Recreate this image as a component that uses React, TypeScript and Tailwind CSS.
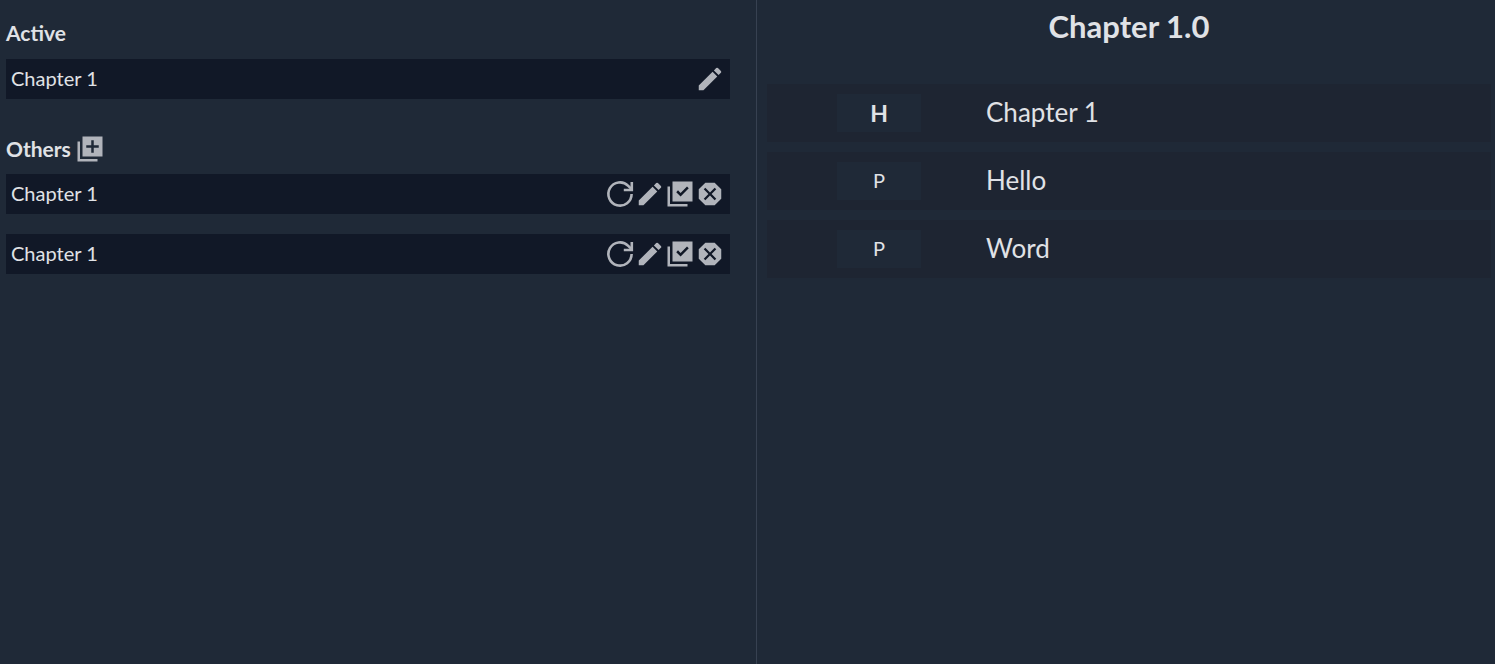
import type { ReactNode } from "react";
import { MdEdit } from "react-icons/md";

function ReloadIcon() {
  return (
    <svg viewBox="0 0 30 30" width="30" height="30" fill="none" stroke="currentColor" strokeWidth="2.6" aria-hidden="true">
      <path d="M26.6 15A11.6 11.6 0 1 1 23.2 6.8L26 9.6" />
      <path d="M26.8 3V11H18.8" />
      <path d="M27.5 12H23L27.5 7z" fill="currentColor" stroke="none" />
    </svg>
  );
}

function SolidIcon({ d }: { d: string }) {
  return (
    <svg viewBox="0 0 24 24" width="30" height="30" fill="currentColor" fillRule="evenodd" aria-hidden="true">
      <path d={d} />
    </svg>
  );
}

const ADD_PATH = "M4 6H2v16h16v-2H4V6zM22 2H6v16h16V2zM19 11h-4v4h-2v-4H9V9h4V5h2v4h4v2z";
const CHECK_PATH =
  "M4 6H2v16h16v-2H4V6zM22 2H6v16h16V2zM12.47 14L9 10.5l1.4-1.41 2.07 2.08L17.6 6 19 7.41z";
const DELETE_PATH =
  "M15.73 3H8.27L3 8.27v7.46L8.27 21h7.46L21 15.73V8.27zM17 15.73L15.73 17 12 13.27 8.27 17 7 15.73 10.73 12 7 8.27 8.27 7 12 10.73 15.73 7 17 8.27 13.27 12z";

function IconButton({ label, children }: { label: string; children: ReactNode }) {
  return (
    <button type="button" aria-label={label} className="flex size-[30px] items-center justify-center text-[#b1b4bb]">
      {children}
    </button>
  );
}

function ChapterRow({ title, active = false }: { title: string; active?: boolean }) {
  return (
    <li className="flex h-10 items-center justify-between bg-[#111827] px-[5px] text-[20px]">
      <span className="pb-0.5">{title}</span>
      <div className="flex">
        {!active && (
          <IconButton label="Restore">
            <ReloadIcon />
          </IconButton>
        )}
        <IconButton label="Edit">
          <MdEdit size={30} />
        </IconButton>
        {!active && (
          <>
            <IconButton label="Set active">
              <SolidIcon d={CHECK_PATH} />
            </IconButton>
            <IconButton label="Delete">
              <SolidIcon d={DELETE_PATH} />
            </IconButton>
          </>
        )}
      </div>
    </li>
  );
}

const blocks = [
  { kind: "H", text: "Chapter 1" },
  { kind: "P", text: "Hello" },
  { kind: "P", text: "Word" },
];

export default function App() {
  return (
    <div className="flex min-h-screen bg-[#1f2937] font-['Lato','Liberation_Sans',sans-serif] text-[#e0e2e6]">
      <section className="box-content flex-1 border-r border-[#374151] pr-[26px] pl-1.5">
        <h2 className="mt-[18px] flex h-[30px] items-center text-[21px] font-bold">Active</h2>
        <ul className="mt-[11px]">
          <ChapterRow title="Chapter 1" active />
        </ul>
        <div className="mt-[35px] flex h-[30px] items-center gap-1">
          <h2 className="text-[21px] font-bold">Others</h2>
          <IconButton label="Add chapter">
            <SolidIcon d={ADD_PATH} />
          </IconButton>
        </div>
        <ul className="mt-2.5 flex flex-col gap-5">
          <ChapterRow title="Chapter 1" />
          <ChapterRow title="Chapter 1" />
        </ul>
      </section>
      <main className="box-content flex-1 pr-1 pl-2.5">
        <h1 className="mt-1.5 text-center text-[31px] leading-10 font-bold">Chapter 1.0</h1>
        <ul className="mt-[38px] flex flex-col gap-2.5">
          {blocks.map((block) => (
            <li key={block.text} className="flex h-[58px] items-center gap-[65px] bg-[#1e2532] pl-[70px] text-[26px]">
              <button
                type="button"
                className={
                  block.kind === "H"
                    ? "h-[38px] w-[84px] bg-[#1f2937] text-[23px] font-bold"
                    : "h-[38px] w-[84px] bg-[#1f2937] pb-0.5 text-[20px]"
                }
              >
                {block.kind}
              </button>
              <span className="pb-0.5">{block.text}</span>
            </li>
          ))}
        </ul>
      </main>
    </div>
  );
}
